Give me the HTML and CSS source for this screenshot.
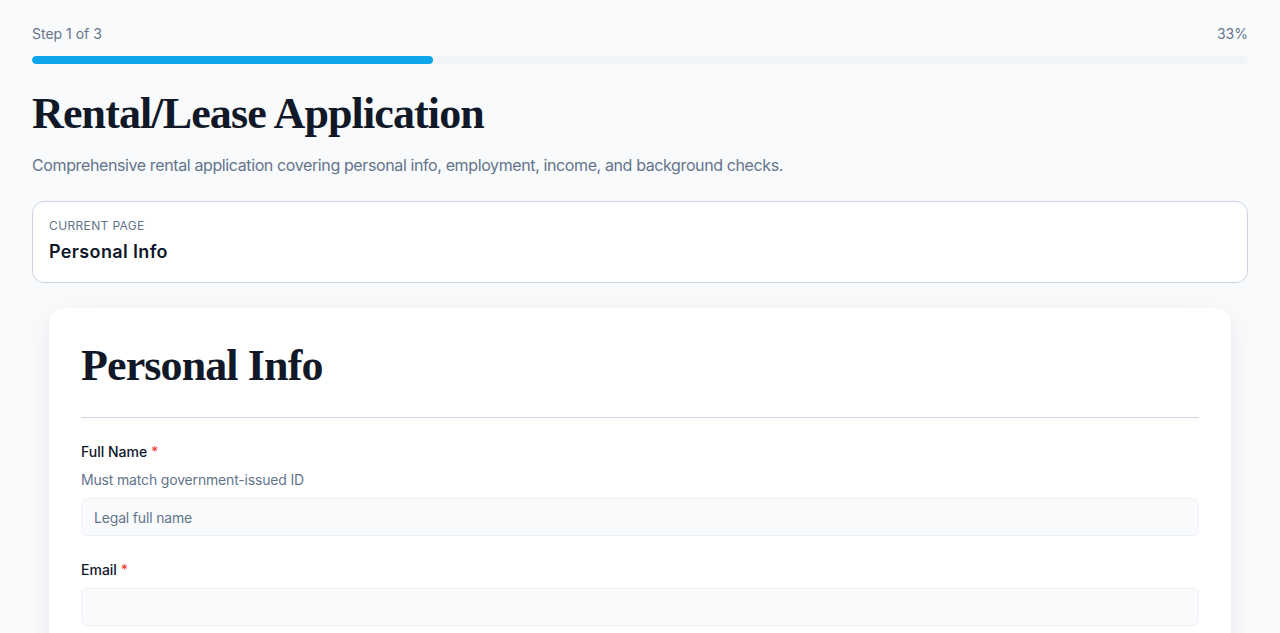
FILE: index.html
```html
<!DOCTYPE html>
<html lang="en">
<head>
<meta charset="utf-8">
<title>Rental/Lease Application</title>
<link rel="stylesheet" href="styles.css">
</head>
<body>
<main class="page">
  <div class="progress-head">
    <span>Step 1 of 3</span>
    <span>33%</span>
  </div>
  <div class="progress-track"><div class="progress-fill" style="width:33%"></div></div>
  <h1 class="title">Rental/Lease Application</h1>
  <p class="desc">Comprehensive rental application covering personal info, employment, income, and background checks.</p>
  <div class="current">
    <div class="current-label">CURRENT PAGE</div>
    <div class="current-name">Personal Info</div>
  </div>
  <section class="card">
    <h2 class="card-title">Personal Info</h2>
    <div class="field">
      <label class="label">Full Name <span class="req">*</span></label>
      <div class="help">Must match government-issued ID</div>
      <input class="input" type="text" placeholder="Legal full name">
    </div>
    <div class="field">
      <label class="label">Email <span class="req">*</span></label>
      <input class="input" type="email">
    </div>
  </section>
</main>
</body>
</html>
```
FILE: styles.css
```css
* { box-sizing: border-box; }
html, body { margin: 0; padding: 0; }
body {
  background: #f8fafc;
  font-family: Inter, "Noto Sans", sans-serif;
  color: #0f172a;
}
.page {
  padding: 24px 32px 40px;
}
.progress-head {
  display: flex;
  justify-content: space-between;
  font-size: 14px;
  line-height: 20px;
  color: #64748b;
}
.progress-track {
  margin-top: 12px;
  height: 8px;
  border-radius: 999px;
  background: #f1f5f9;
  overflow: hidden;
}
.progress-fill {
  height: 100%;
  background: #0ea5e9;
  border-radius: 999px;
}
.title {
  margin: 24px 0 0;
  font-family: "Liberation Serif", "Times New Roman", serif;
  font-weight: 700;
  font-size: 44px;
  line-height: 52px;
  letter-spacing: -0.02em;
  color: #111827;
}
.desc {
  margin: 13px 0 0;
  font-size: 16px;
  line-height: 24px;
  letter-spacing: -0.024em;
  color: #64748b;
}
.current {
  margin-top: 24px;
  background: #fff;
  border: 1px solid #cbd5e1;
  border-radius: 12px;
  padding: 15px 16px 17px;
}
.current-label {
  font-size: 12px;
  line-height: 18px;
  letter-spacing: 0.03em;
  color: #64748b;
}
.current-name {
  margin-top: 4px;
  font-size: 18px;
  line-height: 26px;
  font-weight: 600;
  letter-spacing: 0.02em;
  color: #0f172a;
}
.card {
  margin: 25px 17px 0;
  background: #fff;
  border-radius: 14px;
  padding: 32px 32px 40px;
  box-shadow: 0 10px 30px rgba(15, 23, 42, 0.07), 0 1px 3px rgba(15, 23, 42, 0.04);
}
.card-title {
  margin: 0;
  padding-bottom: 25px;
  border-bottom: 1px solid #cbd5e1;
  font-family: "Liberation Serif", "Times New Roman", serif;
  font-weight: 700;
  font-size: 44px;
  line-height: 52px;
  letter-spacing: -0.02em;
  color: #111827;
}
.field {
  margin-top: 24px;
}
.label {
  display: block;
  font-size: 14px;
  line-height: 20px;
  font-weight: 500;
  color: #0f172a;
}
.req { color: #ef4444; }
.help {
  margin-top: 8px;
  font-size: 14px;
  line-height: 20px;
  letter-spacing: -0.012em;
  color: #64748b;
}
.input {
  display: block;
  width: 100%;
  margin-top: 8px;
  height: 38px;
  padding: 0 12px;
  border: 1px solid #eef2f7;
  border-radius: 6px;
  background: #f8fafc;
  font-family: inherit;
  font-size: 14px;
  letter-spacing: -0.012em;
  color: #0f172a;
  outline: none;
}
.input::placeholder { color: #64748b; }
```
